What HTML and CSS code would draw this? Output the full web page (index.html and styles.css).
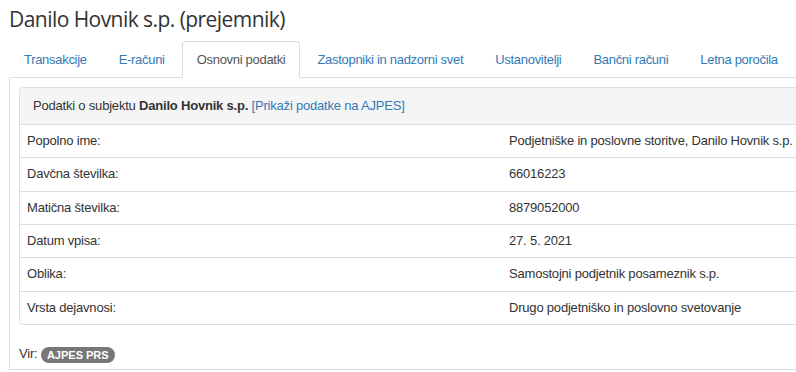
FILE: index.html
```html
<!DOCTYPE html>
<html lang="sl">
<head>
<meta charset="utf-8">
<title>Danilo Hovnik s.p. (prejemnik)</title>
<link rel="stylesheet" href="styles.css">
</head>
<body>
<div class="page">
  <h1 class="title">Danilo Hovnik s.p. (prejemnik)</h1>
  <ul class="tabs">
    <li class="tab"><a href="#">Transakcije</a></li>
    <li class="tab"><a href="#">E-računi</a></li>
    <li class="tab active"><a href="#">Osnovni podatki</a></li>
    <li class="tab"><a href="#">Zastopniki in nadzorni svet</a></li>
    <li class="tab"><a href="#">Ustanovitelji</a></li>
    <li class="tab"><a href="#">Bančni računi</a></li>
    <li class="tab"><a href="#">Letna poročila</a></li>
  </ul>
  <div class="tab-content">
    <div class="panel">
      <div class="panel-heading">Podatki o subjektu <strong>Danilo Hovnik s.p.</strong> <a href="#">[Prikaži podatke na AJPES]</a></div>
      <table class="data">
        <tbody>
          <tr><td class="label">Popolno ime:</td><td>Podjetniške in poslovne storitve, Danilo Hovnik s.p.</td></tr>
          <tr><td class="label">Davčna številka:</td><td>66016223</td></tr>
          <tr><td class="label">Matična številka:</td><td>8879052000</td></tr>
          <tr><td class="label">Datum vpisa:</td><td>27. 5. 2021</td></tr>
          <tr><td class="label">Oblika:</td><td>Samostojni podjetnik posameznik s.p.</td></tr>
          <tr><td class="label">Vrsta dejavnosi:</td><td>Drugo podjetniško in poslovno svetovanje</td></tr>
        </tbody>
      </table>
    </div>
    <p class="source">Vir: <span class="badge">AJPES PRS</span></p>
  </div>
</div>
</body>
</html>
```
FILE: styles.css
```css
html, body {
  margin: 0;
  padding: 0;
  overflow: hidden;
  background: #fff;
}
body {
  font-family: "Liberation Sans", Arial, sans-serif;
  font-size: 13px;
  letter-spacing: -0.2px;
  color: #333;
}
.page {
  width: 985px;
  padding: 0 9px;
}
.title {
  margin: 0;
  padding-top: 6px;
  height: 35px;
  font-family: "Open Sans", "Noto Sans", sans-serif;
  font-weight: 400;
  font-size: 21px;
  line-height: 26px;
  color: #333;
  letter-spacing: -0.55px;
}
.tabs {
  list-style: none;
  margin: 0;
  padding: 0;
  display: flex;
  border-bottom: 1px solid #ddd;
}
.tab {
  margin-bottom: -1px;
  margin-right: 2px;
}
.tab a {
  display: block;
  padding: 8px 14px;
  line-height: 19px;
  font-size: 13px;
  letter-spacing: -0.3px;
  color: #337ab7;
  text-decoration: none;
  border: 1px solid transparent;
  border-radius: 4px 4px 0 0;
}
.tab.active a {
  color: #555;
  background: #fff;
  border-color: #ddd #ddd transparent;
}
.tab-content {
  border: 1px solid #ddd;
  border-top: 0;
  padding: 9px 9px 6px;
}
.panel {
  border: 1px solid #ddd;
  border-radius: 4px;
  overflow: hidden;
}
.panel-heading {
  background: #f5f5f5;
  padding: 9px 13px;
  line-height: 18px;
  border-bottom: 1px solid #ddd;
}
.panel-heading a {
  color: #337ab7;
  text-decoration: none;
}
.data {
  width: 100%;
  border-collapse: collapse;
  table-layout: fixed;
}
.data td {
  padding: 8px 7px;
  line-height: 16.33px;
  border-top: 1px solid #ddd;
  vertical-align: top;
  white-space: nowrap;
}
.data tr:first-child td {
  border-top: 0;
}
.data td.label {
  width: 468px;
}
.source {
  margin: 20px 0 0;
  line-height: 18px;
}
.badge {
  display: inline-block;
  background: #777;
  color: #fff;
  font-weight: 700;
  font-size: 11px;
  line-height: 12px;
  letter-spacing: 0;
  padding: 2px 6px;
  border-radius: 8px;
  vertical-align: -1px;
}
```
